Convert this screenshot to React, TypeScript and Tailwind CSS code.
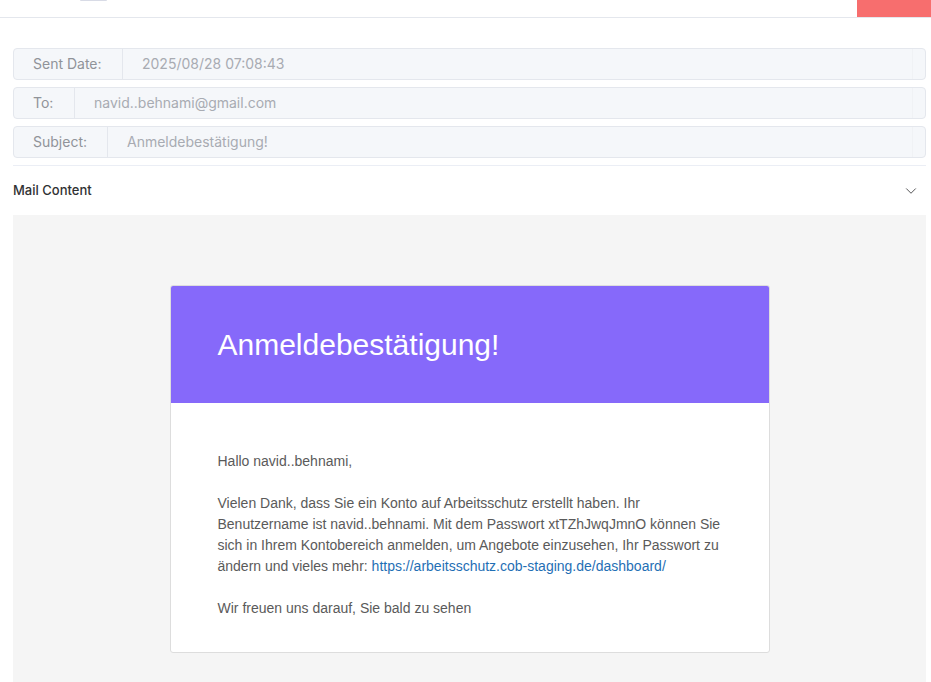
import { ChevronDown } from "lucide-react";

const fields = [
    { label: "Sent Date:", value: "2025/08/28 07:08:43", w: "w-[109px]" },
    { label: "To:", value: "navid..behnami@gmail.com", w: "w-[61px]" },
    { label: "Subject:", value: "Anmeldebestätigung!", w: "w-[94px]" },
];

const FieldRow = ({ label, value, w }: { label: string; value: string; w: string }) => (
    <div className="flex h-8 w-full rounded-[4px] border border-[#e4e7ed] bg-[#f5f7fa] text-sm">
        <div className={`${w} flex shrink-0 items-center border-r border-[#e4e7ed] pl-[19px] text-[#909399]`}>
            {label}
        </div>
        <div className="flex flex-1 items-center pr-3">
            <div className="flex h-full flex-1 items-center border-r border-[#f0f2f5] pl-[19px] text-[#a8abb2]">
                {value}
            </div>
        </div>
    </div>
);

const App = () => {
    return (
        <div className="flex h-[682px] w-full flex-col overflow-hidden bg-white font-['Inter',sans-serif]">
            <header className="flex h-[18px] shrink-0 border-b border-[#e4e7ed]">
                <div className="ml-[80px] h-[1px] w-[27px] rounded-b bg-[#d8dbe6]" />
                <div className="flex-1" />
                <div className="h-[17px] w-[74px] bg-[#f76e6e]" />
            </header>

            <main className="flex flex-1 flex-col pl-[13px] pr-[5px] pt-[30px]">
                <div className="flex flex-col gap-[7px]">
                    {fields.map((f) => (
                        <FieldRow key={f.label} {...f} />
                    ))}
                </div>

                <div className="mt-[7px] border-t border-[#ebeef5]" />

                <div className="flex h-[49px] items-center justify-between pr-[6px] text-[13px] font-medium text-[#303133]">
                    <span>Mail Content</span>
                    <ChevronDown size={18} strokeWidth={1.1} className="text-[#303133]" />
                </div>

                <div className="flex flex-1 justify-center bg-[#f5f5f5] pt-[70px] font-['Liberation_Sans',Arial,sans-serif]">
                    <div className="h-fit w-[600px] overflow-hidden rounded-[3px] border border-[#dddddd] bg-white">
                        <div className="flex h-[117px] items-center bg-[#8669fa] px-[47px] text-[30px] text-white">
                            Anmeldebestätigung!
                        </div>
                        <div className="px-[47px] pb-[33px] pt-[48px] text-sm leading-[21px] text-[#5a5a5a]">
                            <p>Hallo navid..behnami,</p>
                            <p className="mt-[21px]">
                                Vielen Dank, dass Sie ein Konto auf Arbeitsschutz erstellt haben. Ihr Benutzername ist
                                navid..behnami. Mit dem Passwort xtTZhJwqJmnO können Sie sich in Ihrem Kontobereich
                                anmelden, um Angebote einzusehen, Ihr Passwort zu ändern und vieles mehr:{" "}
                                <a className="text-[#1f6fb5]" href="#">
                                    https://arbeitsschutz.cob-staging.de/dashboard/
                                </a>
                            </p>
                            <p className="mt-[21px]">Wir freuen uns darauf, Sie bald zu sehen</p>
                        </div>
                    </div>
                </div>
            </main>
        </div>
    );
};

export default App;
